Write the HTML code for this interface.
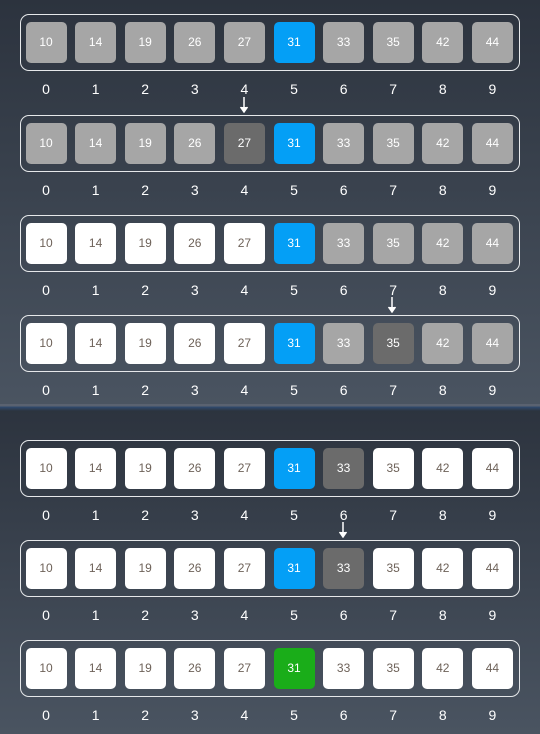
<!DOCTYPE html>
<html><head><style>
*{margin:0;padding:0;box-sizing:border-box}
body{width:540px;height:734px;overflow:hidden;font-family:"Liberation Sans","DejaVu Sans",sans-serif;position:relative;background:#3a424d}
.p{position:absolute;left:0;width:540px}
.p1{top:0;height:405px;background:linear-gradient(#2c333e,#4a5461)}
.p2{top:407px;height:327px;background:linear-gradient(#2c333e,#4a5461)}
.sep{position:absolute;left:0;top:404px;width:540px;height:7px;background:linear-gradient(#5a6270 0,#5a6270 2px,#2f4a6e 3px,#2c333e 7px)}
.row{position:absolute;left:20px;width:500px;height:57px;border:1.5px solid #e6e8ea;border-radius:9px}
.c{position:absolute;top:7px;width:41px;height:41px;border-radius:5px;font-size:12px;line-height:41px;text-align:center;color:#fff}
.g{background:#a6a6a6}.d{background:#6b6b6b}.b{background:#049ff6}.w{background:#fff;color:#6e6259}.gr{background:#1aad19}
.lab{position:absolute;width:30px;text-align:center;font-size:14px;color:#fff}
.ar{position:absolute;width:10px;height:16px}
</style></head><body>
<div class="p p1"></div><div class="p p2"></div><div class="sep"></div>
<div id="r"></div>
<svg class="ar" style="left:239px;top:97px" viewBox="0 0 10 16"><path d="M5 0V14M1.5 10L5 15L8.5 10" stroke="#fff" stroke-width="1.5" fill="#fff"/></svg>
<svg class="ar" style="left:387px;top:297px" viewBox="0 0 10 16"><path d="M5 0V14M1.5 10L5 15L8.5 10" stroke="#fff" stroke-width="1.5" fill="#fff"/></svg>
<svg class="ar" style="left:338px;top:522px" viewBox="0 0 10 16"><path d="M5 0V14M1.5 10L5 15L8.5 10" stroke="#fff" stroke-width="1.5" fill="#fff"/></svg>
<script>
var v=[10,14,19,26,27,31,33,35,42,44];
var rows=[[14,"gggggbgggg"],[115,"ggggdbgggg"],[215,"wwwwwbgggg"],[315,"wwwwwbgdgg"],[440,"wwwwwbdwww"],[540,"wwwwwbdwww"],[640,"wwwwwGwwww"]];
var h="";
rows.forEach(function(r){
 h+='<div class="row" style="top:'+r[0]+'px">';
 for(var i=0;i<10;i++){var k=r[1][i];var cl=k=="G"?"gr":k;
  h+='<div class="c '+cl+'" style="left:'+(4.5+49.6*i)+'px">'+v[i]+'</div>';}
 h+='</div>';
 for(var i=0;i<10;i++)h+='<div class="lab" style="left:'+(31+49.6*i)+'px;top:'+(r[0]+67)+'px">'+i+'</div>';
});
document.getElementById("r").innerHTML=h;
</script>
</body></html>
